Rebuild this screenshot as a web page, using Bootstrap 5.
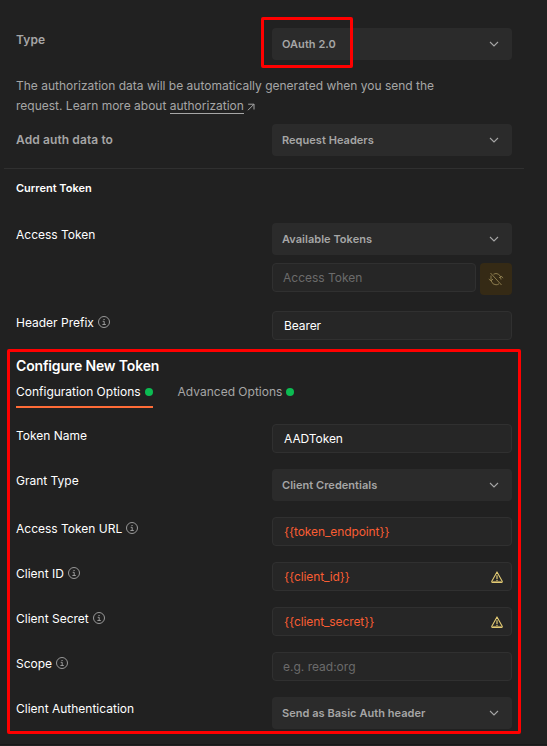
<!DOCTYPE html>
<html lang="en" data-bs-theme="dark">
<head>
<meta charset="utf-8">
<meta name="viewport" content="width=device-width, initial-scale=1">
<title>Authorization</title>
<link href="https://cdn.jsdelivr.net/npm/bootstrap@5.3.0/dist/css/bootstrap.min.css" rel="stylesheet">
<style>
body{background:#212121;color:#fff;font:400 12px/20px Inter,"Liberation Sans",sans-serif;overflow:hidden}
.panel{height:745px;padding:28px 35px 0 16px;border-bottom:1px solid #191919}
.muted{color:#a6a6a6}
.opt{display:grid;grid-template-columns:256px 240px;margin-bottom:16px}
.opt-label{padding-top:2px;line-height:20px}
.opt-label svg{margin-left:.5px;vertical-align:-1px}
.strong-label{font-weight:600;letter-spacing:.1px}
.pick{height:32px;width:240px;background:#2b2b2b;color:#a6a6a6;border:0;border-radius:4px;padding:0 12px 0 10px;font-size:11px;font-weight:600;line-height:16px;letter-spacing:.04px}
.field{height:29px;min-height:29px;background:#262626;border:1px solid #303030;border-radius:4px;padding:0 8px 0 11px;line-height:27px;color:#fff;letter-spacing:-.08px}
.field.empty{color:#6b6b6b;letter-spacing:0}
.field.empty{padding-left:10px}
.field.variable{color:#f95d33;letter-spacing:-.1px}
.sync{width:32px;height:32px;background:#352a15;border-radius:4px;color:#8a7a4c}
.intro{height:40px;margin-bottom:8px}
.intro a{color:#a6a6a6;text-decoration:none;border-bottom:1px solid #a6a6a6}
.rule{height:1px;background:#303030;margin:0 -12px 0 -12px}
.current{font-size:11px;font-weight:600;line-height:16px;margin:11px 0 27px}
.configure{font-size:14px;font-weight:600;line-height:20px;letter-spacing:-.15px}
.tabs{gap:25px;height:32px;padding-top:6px;margin-bottom:16px}
.tab-item{height:26px;border-bottom:2px solid transparent;gap:4px;line-height:20px}
.tab-item.active{border-color:#ff6c37}
.dot{width:8px;height:8px;margin-top:6px;background:#0cbb52;border-radius:50%}
.callout{position:absolute;border:3px solid #f00;border-radius:2px;pointer-events:none}
.callout-type{left:261px;top:17px;width:92px;height:51px}
.callout-config{left:7px;top:349px;width:514px;height:385px}
</style>
<script src="https://cdn.jsdelivr.net/npm/bootstrap@5.3.0/dist/js/bootstrap.bundle.min.js"></script>
</head>
<body>
<svg class="d-none">
<symbol id="chev" viewBox="0 0 12 12"><path d="M2 4l4 4 4-4" fill="none" stroke="#a6a6a6" stroke-width="1.1"/></symbol>
<symbol id="info" viewBox="0 0 12 12"><circle cx="6" cy="6" r="5.5" fill="none" stroke="#a6a6a6" stroke-width=".9"/><path d="M4.7 5.3H6.2V8.5M4.4 8.5H7.8" fill="none" stroke="#a6a6a6" stroke-width=".9"/><path d="M5.5 3h1.1v1.1H5.5z" fill="#a6a6a6"/></symbol>
<symbol id="warn" viewBox="0 0 12 12"><path d="M6 .9L11.2 10.3Q11.5 11.3 10.6 11.4H1.4Q.5 11.3.8 10.3Z" fill="none" stroke="#e3cb74" stroke-width="1.1" stroke-linejoin="round"/><path d="M6 4.2V8M6 8.8V10.1" stroke="#e3cb74" stroke-width="1.2"/><path d="M1.2 10.4H10.8" stroke="#a8955a"/></symbol>
</svg>
<main class="panel">
  <div class="opt mb-3"><div class="opt-label strong-label muted">Type</div><div class="pick d-flex align-items-center justify-content-between">OAuth 2.0<svg width="12" height="12"><use href="#chev"/></svg></div></div>
  <p class="intro muted">The authorization data will be automatically generated when you send the<br>request. Learn more about <a href="#">authorization</a> <svg width="8" height="8" viewBox="0 0 8 8"><path d="M1.2 1.2H7V6.5M7 1.2L1 7.2" fill="none" stroke="#a6a6a6"/></svg></p>
  <div class="opt align-items-center mb-0 pb-2"><div class="strong-label muted">Add auth data to</div><div class="pick d-flex align-items-center justify-content-between">Request Headers<svg width="12" height="12"><use href="#chev"/></svg></div></div>
  <div class="pt-1"><div class="rule"></div></div>
  <h2 class="current">Current Token</h2>
  <div class="opt"><div class="opt-label">Access Token</div><div>
    <div class="pick d-flex align-items-center justify-content-between mb-2">Available Tokens<svg width="12" height="12"><use href="#chev"/></svg></div>
    <div class="d-flex gap-1"><div class="field empty flex-grow-1">Access Token</div><div class="sync d-flex align-items-center justify-content-center"><svg width="16" height="16" viewBox="0 0 16 16" fill="none" stroke="currentColor"><path d="M2.5 2L13.5 14M5.5 3.2Q8 1.8 10.5 3.2Q13 4.8 13 8.5M11 7L13 5L15.2 7M3 4.5V10M.8 8L3 10L5 8M3.2 10Q4.5 13.8 8 13.8Q10 13.8 11 12.7"/></svg></div></div>
  </div></div>
  <div class="opt"><div class="opt-label">Header Prefix <svg width="12" height="12"><use href="#info"/></svg></div><div class="field">Bearer</div></div>
  <h1 class="configure mb-0">Configure New Token</h1>
  <div class="tabs d-flex"><div class="tab-item active d-flex">Configuration Options<span class="dot"></span></div><div class="tab-item muted d-flex">Advanced Options<span class="dot"></span></div></div>
  <div class="opt"><div class="opt-label">Token Name</div><div class="field">AADToken</div></div>
  <div class="opt"><div class="opt-label">Grant Type</div><div class="pick d-flex align-items-center justify-content-between">Client Credentials<svg width="12" height="12"><use href="#chev"/></svg></div></div>
  <div class="opt"><div class="opt-label">Access Token URL <svg width="12" height="12"><use href="#info"/></svg></div><div class="field variable">{{token_endpoint}}</div></div>
  <div class="opt"><div class="opt-label">Client ID <svg width="12" height="12"><use href="#info"/></svg></div><div class="field variable d-flex align-items-center justify-content-between">{{client_id}}<svg width="12" height="12"><use href="#warn"/></svg></div></div>
  <div class="opt"><div class="opt-label">Client Secret <svg width="12" height="12"><use href="#info"/></svg></div><div class="field variable d-flex align-items-center justify-content-between">{{client_secret}}<svg width="12" height="12"><use href="#warn"/></svg></div></div>
  <div class="opt"><div class="opt-label">Scope <svg width="12" height="12"><use href="#info"/></svg></div><div class="field empty">e.g. read:org</div></div>
  <div class="opt mb-0"><div class="opt-label">Client Authentication</div><div class="pick d-flex align-items-center justify-content-between">Send as Basic Auth header<svg width="12" height="12"><use href="#chev"/></svg></div></div>
</main>
<div class="callout callout-type"></div>
<div class="callout callout-config"></div>
</body>
</html>
